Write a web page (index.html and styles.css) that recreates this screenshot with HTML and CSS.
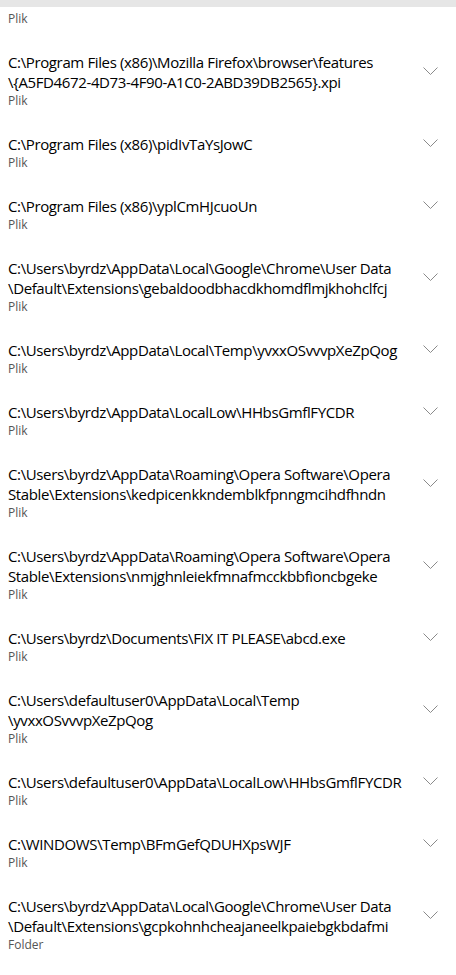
FILE: index.html
```html
<!DOCTYPE html>
<html lang="pl">
<head>
    <meta charset="UTF-8">
    <meta name="viewport" content="width=device-width, initial-scale=1.0">
    <title>Zagrożenia</title>
    <link rel="stylesheet" href="styles.css">
</head>
<body>
    <div class="topbar"></div>

    <div class="list">
        <div class="item tail">
            <div class="type">Plik</div>
        </div>

        <div class="item">
            <div class="head">
                <div class="path">C:\Program Files (x86)\Mozilla Firefox\browser\features<br>\{A5FD4672-4D73-4F90-A1C0-2ABD39DB2565}.xpi</div>
                <svg class="chevron" width="15" height="8" viewBox="0 0 15 8"><polyline points="0.5,0.5 7.5,7.5 14.5,0.5"/></svg>
            </div>
            <div class="type">Plik</div>
        </div>

        <div class="item">
            <div class="head">
                <div class="path">C:\Program Files (x86)\pidIvTaYsJowC</div>
                <svg class="chevron" width="15" height="8" viewBox="0 0 15 8"><polyline points="0.5,0.5 7.5,7.5 14.5,0.5"/></svg>
            </div>
            <div class="type">Plik</div>
        </div>

        <div class="item">
            <div class="head">
                <div class="path">C:\Program Files (x86)\yplCmHJcuoUn</div>
                <svg class="chevron" width="15" height="8" viewBox="0 0 15 8"><polyline points="0.5,0.5 7.5,7.5 14.5,0.5"/></svg>
            </div>
            <div class="type">Plik</div>
        </div>

        <div class="item">
            <div class="head">
                <div class="path">C:\Users\byrdz\AppData\Local\Google\Chrome\User Data<br>\Default\Extensions\gebaldoodbhacdkhomdflmjkhohclfcj</div>
                <svg class="chevron" width="15" height="8" viewBox="0 0 15 8"><polyline points="0.5,0.5 7.5,7.5 14.5,0.5"/></svg>
            </div>
            <div class="type">Plik</div>
        </div>

        <div class="item">
            <div class="head">
                <div class="path">C:\Users\byrdz\AppData\Local\Temp\yvxxOSvvvpXeZpQog</div>
                <svg class="chevron" width="15" height="8" viewBox="0 0 15 8"><polyline points="0.5,0.5 7.5,7.5 14.5,0.5"/></svg>
            </div>
            <div class="type">Plik</div>
        </div>

        <div class="item">
            <div class="head">
                <div class="path">C:\Users\byrdz\AppData\LocalLow\HHbsGmflFYCDR</div>
                <svg class="chevron" width="15" height="8" viewBox="0 0 15 8"><polyline points="0.5,0.5 7.5,7.5 14.5,0.5"/></svg>
            </div>
            <div class="type">Plik</div>
        </div>

        <div class="item">
            <div class="head">
                <div class="path">C:\Users\byrdz\AppData\Roaming\Opera Software\Opera<br>Stable\Extensions\kedpicenkkndemblkfpnngmcihdfhndn</div>
                <svg class="chevron" width="15" height="8" viewBox="0 0 15 8"><polyline points="0.5,0.5 7.5,7.5 14.5,0.5"/></svg>
            </div>
            <div class="type">Plik</div>
        </div>

        <div class="item">
            <div class="head">
                <div class="path">C:\Users\byrdz\AppData\Roaming\Opera Software\Opera<br>Stable\Extensions\nmjghnleiekfmnafmcckbbfioncbgeke</div>
                <svg class="chevron" width="15" height="8" viewBox="0 0 15 8"><polyline points="0.5,0.5 7.5,7.5 14.5,0.5"/></svg>
            </div>
            <div class="type">Plik</div>
        </div>

        <div class="item">
            <div class="head">
                <div class="path">C:\Users\byrdz\Documents\FIX IT PLEASE\abcd.exe</div>
                <svg class="chevron" width="15" height="8" viewBox="0 0 15 8"><polyline points="0.5,0.5 7.5,7.5 14.5,0.5"/></svg>
            </div>
            <div class="type">Plik</div>
        </div>

        <div class="item">
            <div class="head">
                <div class="path">C:\Users\defaultuser0\AppData\Local\Temp<br>\yvxxOSvvvpXeZpQog</div>
                <svg class="chevron" width="15" height="8" viewBox="0 0 15 8"><polyline points="0.5,0.5 7.5,7.5 14.5,0.5"/></svg>
            </div>
            <div class="type">Plik</div>
        </div>

        <div class="item">
            <div class="head">
                <div class="path">C:\Users\defaultuser0\AppData\LocalLow\HHbsGmflFYCDR</div>
                <svg class="chevron" width="15" height="8" viewBox="0 0 15 8"><polyline points="0.5,0.5 7.5,7.5 14.5,0.5"/></svg>
            </div>
            <div class="type">Plik</div>
        </div>

        <div class="item">
            <div class="head">
                <div class="path">C:\WINDOWS\Temp\BFmGefQDUHXpsWJF</div>
                <svg class="chevron" width="15" height="8" viewBox="0 0 15 8"><polyline points="0.5,0.5 7.5,7.5 14.5,0.5"/></svg>
            </div>
            <div class="type">Plik</div>
        </div>

        <div class="item">
            <div class="head">
                <div class="path">C:\Users\byrdz\AppData\Local\Google\Chrome\User Data<br>\Default\Extensions\gcpkohnhcheajaneelkpaiebgkbdafmi</div>
                <svg class="chevron" width="15" height="8" viewBox="0 0 15 8"><polyline points="0.5,0.5 7.5,7.5 14.5,0.5"/></svg>
            </div>
            <div class="type">Folder</div>
        </div>
    </div>
</body>
</html>
```

FILE: styles.css
```css
body {
    font-family: "Open Sans", "Noto Sans", sans-serif;
    background-color: white;
    color: #000;
    margin: 0;
    padding: 0;
}
.topbar {
    height: 7px;
    background-color: #e6e6e6;
}
.item {
    padding: 13px 18px 12px 8px;
}
.item.tail {
    padding-top: 3px;
}
.head {
    display: flex;
    align-items: center;
    justify-content: space-between;
}
.path {
    font-size: 15px;
    line-height: 20px;
    letter-spacing: -0.37px;
    white-space: nowrap;
}
.chevron {
    flex-shrink: 0;
    margin-bottom: 3px;
}
.chevron polyline {
    fill: none;
    stroke: #8a8a8a;
    stroke-width: 1;
}
.type {
    margin-top: 1px;
    font-size: 12px;
    line-height: 16px;
    color: #555;
}
```
